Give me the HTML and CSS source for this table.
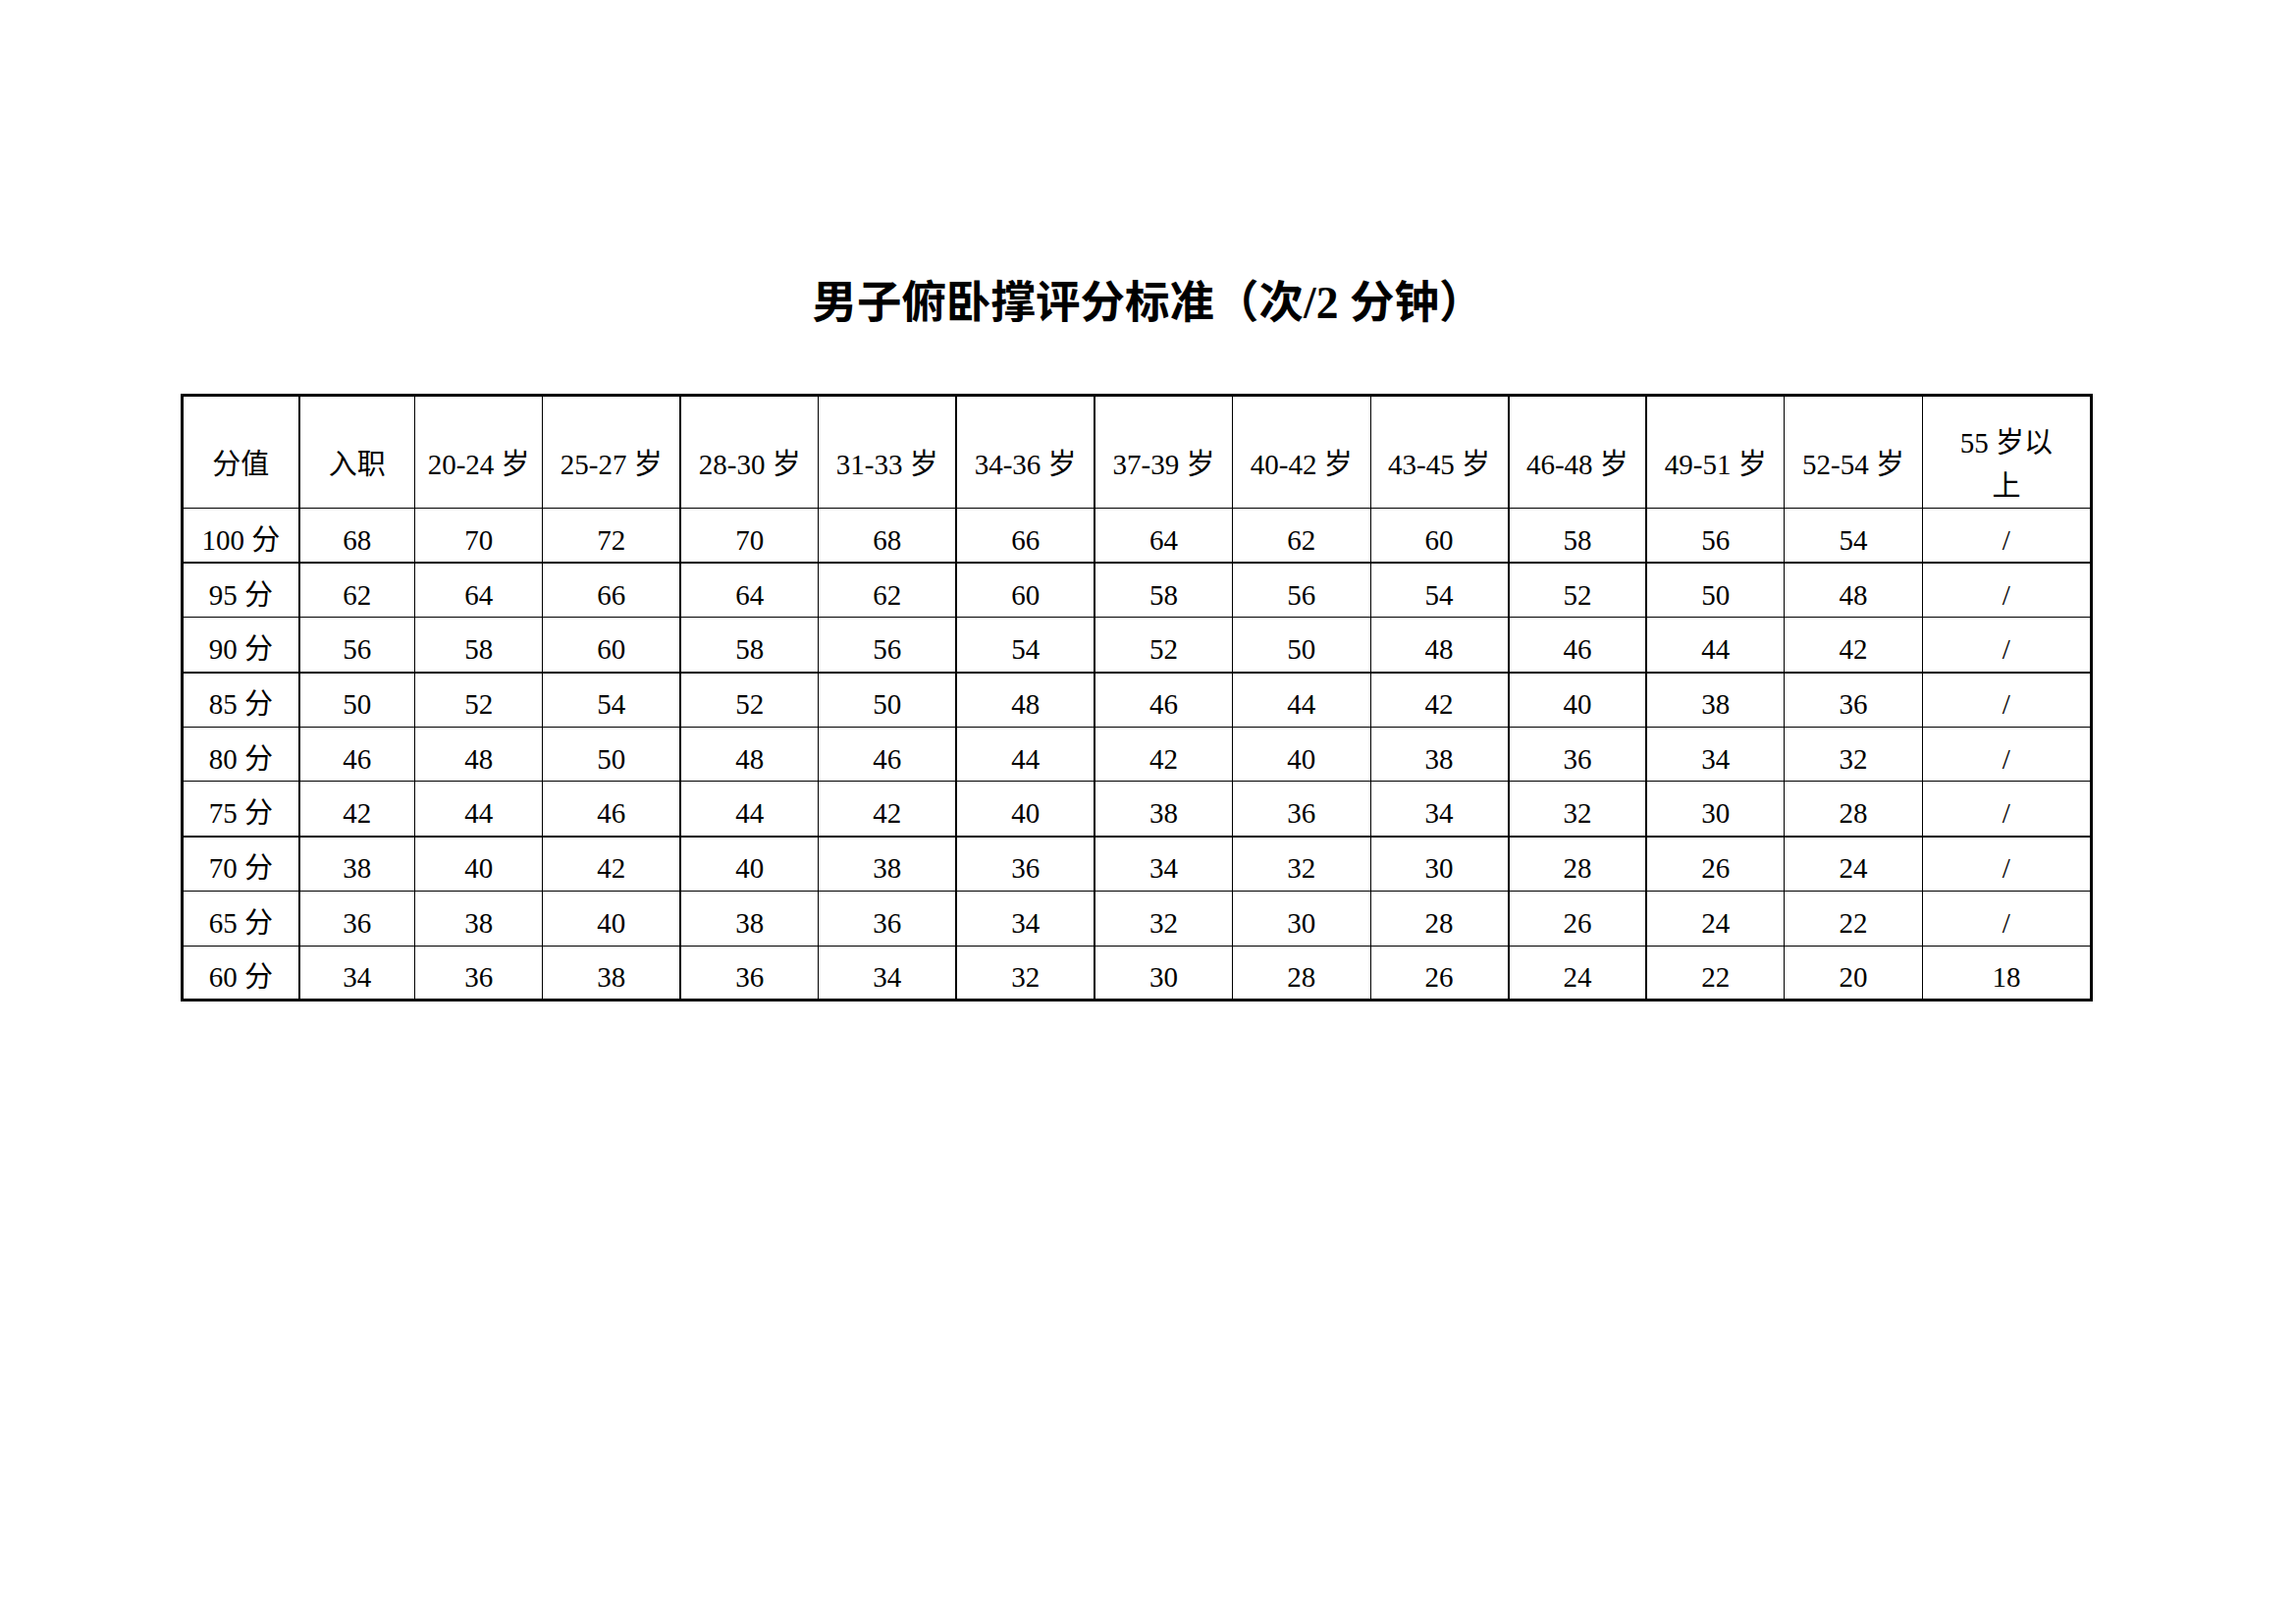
FILE: index.html
```html
<!DOCTYPE html>
<html lang="zh-CN">
<head>
<meta charset="utf-8">
<title>男子俯卧撑评分标准</title>
<link rel="stylesheet" href="styles.css">
</head>
<body>
<div class="page">
  <h1 class="title">男子俯卧撑评分标准（次/2 分钟）</h1>
  <table class="score">
    <colgroup>
      <col class="c-score">
      <col class="c-entry">
      <col class="c-a">
      <col class="c-b"><col class="c-b"><col class="c-b"><col class="c-b"><col class="c-b"><col class="c-b"><col class="c-b"><col class="c-b"><col class="c-b"><col class="c-b">
      <col class="c-last">
    </colgroup>
    <thead>
      <tr class="head">
        <th>分值</th><th class="tl">入职</th><th>20-24 岁</th><th>25-27 岁</th><th class="tl">28-30 岁</th><th>31-33 岁</th><th class="tl">34-36 岁</th><th class="tl">37-39 岁</th><th>40-42 岁</th><th>43-45 岁</th><th class="tl">46-48 岁</th><th class="tl">49-51 岁</th><th>52-54 岁</th><th>55 岁以<br>上</th>
      </tr>
    </thead>
    <tbody>
      <tr class="tr-thick"><td>100 分</td><td class="tl">68</td><td>70</td><td>72</td><td class="tl">70</td><td>68</td><td class="tl">66</td><td class="tl">64</td><td>62</td><td>60</td><td class="tl">58</td><td class="tl">56</td><td>54</td><td>/</td></tr>
      <tr><td>95 分</td><td class="tl">62</td><td>64</td><td>66</td><td class="tl">64</td><td>62</td><td class="tl">60</td><td class="tl">58</td><td>56</td><td>54</td><td class="tl">52</td><td class="tl">50</td><td>48</td><td>/</td></tr>
      <tr class="tr-thick"><td>90 分</td><td class="tl">56</td><td>58</td><td>60</td><td class="tl">58</td><td>56</td><td class="tl">54</td><td class="tl">52</td><td>50</td><td>48</td><td class="tl">46</td><td class="tl">44</td><td>42</td><td>/</td></tr>
      <tr><td>85 分</td><td class="tl">50</td><td>52</td><td>54</td><td class="tl">52</td><td>50</td><td class="tl">48</td><td class="tl">46</td><td>44</td><td>42</td><td class="tl">40</td><td class="tl">38</td><td>36</td><td>/</td></tr>
      <tr><td>80 分</td><td class="tl">46</td><td>48</td><td>50</td><td class="tl">48</td><td>46</td><td class="tl">44</td><td class="tl">42</td><td>40</td><td>38</td><td class="tl">36</td><td class="tl">34</td><td>32</td><td>/</td></tr>
      <tr class="tr-thick"><td>75 分</td><td class="tl">42</td><td>44</td><td>46</td><td class="tl">44</td><td>42</td><td class="tl">40</td><td class="tl">38</td><td>36</td><td>34</td><td class="tl">32</td><td class="tl">30</td><td>28</td><td>/</td></tr>
      <tr><td>70 分</td><td class="tl">38</td><td>40</td><td>42</td><td class="tl">40</td><td>38</td><td class="tl">36</td><td class="tl">34</td><td>32</td><td>30</td><td class="tl">28</td><td class="tl">26</td><td>24</td><td>/</td></tr>
      <tr><td>65 分</td><td class="tl">36</td><td>38</td><td>40</td><td class="tl">38</td><td>36</td><td class="tl">34</td><td class="tl">32</td><td>30</td><td>28</td><td class="tl">26</td><td class="tl">24</td><td>22</td><td>/</td></tr>
      <tr><td>60 分</td><td class="tl">34</td><td>36</td><td>38</td><td class="tl">36</td><td>34</td><td class="tl">32</td><td class="tl">30</td><td>28</td><td>26</td><td class="tl">24</td><td class="tl">22</td><td>20</td><td>18</td></tr>
    </tbody>
  </table>
</div>
</body>
</html>
```
FILE: styles.css
```css
html, body {
  margin: 0;
  padding: 0;
  background: #ffffff;
}

body {
  width: 2339px;
  height: 1654px;
  color: #000000;
  font-family: "Liberation Serif", "Noto Sans CJK SC", serif;
}

.page {
  padding-top: 279px;
}

.title {
  margin: 0;
  height: 60px;
  line-height: 60px;
  text-align: center;
  font-size: 45.5px;
  font-weight: bold;
  font-family: "Liberation Serif", "Noto Sans CJK SC", serif;
}

.score {
  margin-top: 62px;
  margin-left: 184px;
  width: 1948px;
  table-layout: fixed;
  border-collapse: collapse;
  border: 3px solid #000;
  font-size: 29px;
}

.c-score { width: 119px; }
.c-entry { width: 118px; }
.c-a { width: 130px; }
.c-b { width: 140.5px; }
.c-last { width: 172px; }

.score th,
.score td {
  border: 1px solid #000;
  padding: 0;
  text-align: center;
  font-weight: normal;
  white-space: nowrap;
}

.score th {
  height: 115px;
  line-height: 44px;
  vertical-align: middle;
  padding-top: 25px;
  box-sizing: border-box;
}

.score td {
  height: 55.7px;
  line-height: 30px;
  vertical-align: middle;
  padding-top: 9px;
  box-sizing: border-box;
}

.score .tl {
  border-left: 2px solid #000;
}

.score tr.tr-thick td {
  border-bottom: 2px solid #000;
}

.score tr > :first-child {
  border-left: 3px solid #000;
}

.score tr > :last-child {
  border-right: 3px solid #000;
}
```
